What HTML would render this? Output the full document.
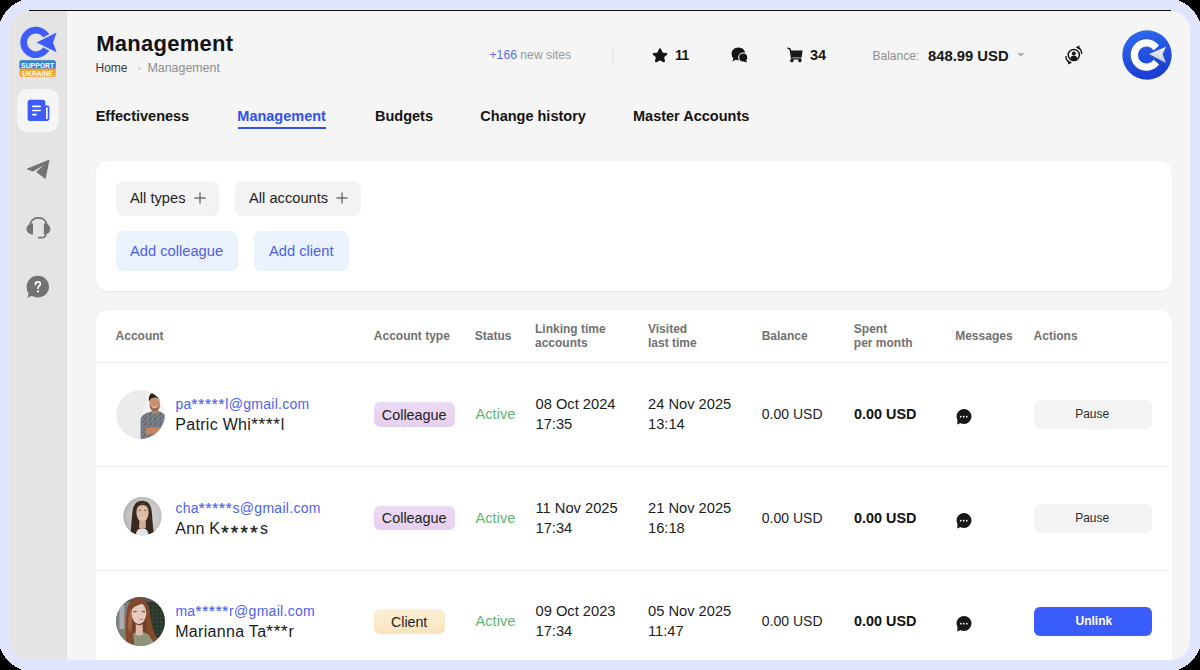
<!DOCTYPE html>
<html><head><meta charset="utf-8">
<style>
*{margin:0;padding:0;box-sizing:border-box}
html,body{width:1200px;height:670px;overflow:hidden;background:#000;font-family:"Liberation Sans",sans-serif}
.abs{position:absolute}
.t{position:absolute;white-space:nowrap;line-height:1}
#frame{position:absolute;left:0;top:0;width:1200px;height:670px;background:#dfe5fd;border-radius:23px}
#app{position:absolute;left:10px;top:11px;width:1180px;height:649px;border-radius:19px;overflow:hidden;background:#f5f5f5}
#pg{position:absolute;left:-10px;top:-11px;width:1200px;height:670px}
#topline{position:absolute;left:29px;top:10px;width:1142px;height:1px;background:#111}
#side{position:absolute;left:10px;top:11px;width:57px;height:649px;background:#e4e4e4;border-right:1px solid #e0e0e0}
.card{position:absolute;background:#fff;border-radius:12px;box-shadow:0 0 0 0.5px rgba(0,0,0,0.02),0 1px 1.5px rgba(0,0,0,0.06)}
.chip{position:absolute;background:#f3f3f3;border-radius:7px}
.addb{position:absolute;background:#eaf2fd;border-radius:7px}
.th{position:absolute;white-space:nowrap;line-height:14px;font-weight:bold;font-size:12px;color:#717171}
.sep{position:absolute;left:0;width:1076px;height:1px;background:#f1f1f1}
.email{color:#4b62f4;font-size:14px;letter-spacing:0.29px}
.a5{letter-spacing:0.9px;font-size:15px;line-height:0;-webkit-text-stroke:0.25px #4b62f4}
.a4{letter-spacing:0.75px;font-size:17px;line-height:0;-webkit-text-stroke:0.1px #1b1b1b}
.name{color:#1b1b1b;font-size:16px;letter-spacing:0.31px}
.badge{position:absolute;border-radius:6px;width:81px;height:24.5px}
.cell{color:#1d1d1d;font-size:14.7px}
.ast{font-size:19px;-webkit-text-stroke:0.45px #1b1b1b;line-height:0;letter-spacing:2.3px;position:relative;top:5.4px;margin-left:0.8px}
.btn{position:absolute;width:118px;height:29px;border-radius:6px;background:#f3f3f3}
</style></head>
<body>
<svg class="abs" style="left:0;top:0" width="1200" height="670" shape-rendering="crispEdges"><rect width="1200" height="670" fill="#000"/><path fill="#dfe5fd" d="M22,0 L1178,0 Q1193.8,6.2 1200,22 L1200,648 Q1193.8,663.8 1178,670 L22,670 Q6.2,663.8 0,648 L0,22 Q6.2,6.2 22,0 Z"/></svg>
<div id="app"><div id="pg">
  <div id="side"></div>
  <svg class="abs" style="left:18px;top:24px" width="42" height="56" viewBox="18 24 42 56">
    <path fill="#3d5cfb" d="M49.23,34.32 A15.6,15.6 0 1 0 49.23,50.48 L43.33,47.61 A9,9 0 1 1 43.33,37.19 Z"/>
    <path fill="#3d5cfb" d="M36.6,42.4 L56.6,32.4 L53,42.4 L56.6,52.2 Z"/>
    <rect x="19.5" y="60.3" width="36.2" height="16.5" rx="2" fill="#f6a22b"/>
    <path d="M19.5,62.3 Q19.5,60.3 21.5,60.3 L53.7,60.3 Q55.7,60.3 55.7,62.3 L55.7,68.6 L19.5,68.6 Z" fill="#2c82e0"/>
    <text x="37.6" y="67.6" text-anchor="middle" font-family="Liberation Sans" font-weight="bold" font-size="7.6" fill="#fff" textLength="33" lengthAdjust="spacingAndGlyphs">SUPPORT</text>
    <text x="37.6" y="75.8" text-anchor="middle" font-family="Liberation Sans" font-weight="bold" font-size="7.6" fill="#fff" textLength="31" lengthAdjust="spacingAndGlyphs">UKRAINE</text>
  </svg>
  <div class="abs" style="left:17px;top:88.5px;width:42px;height:43.5px;border-radius:11px;background:#f5f5f5"></div>
  <svg class="abs" style="left:26px;top:98px" width="26" height="26" viewBox="0 0 26 26">
    <path fill="#3d5cfb" d="M1.6,4.6 Q1.6,1.8 4.4,1.8 L16.6,1.8 Q19.4,1.8 19.4,4.6 L19.4,7.6 L21.4,7.6 Q23.4,7.6 23.4,9.6 L23.4,20.2 Q23.4,23 20.6,23 L4.4,23 Q1.6,23 1.6,20.2 Z"/>
    <rect x="20" y="9.3" width="1.7" height="11.8" rx="0.85" fill="#fff"/>
    <rect x="6" y="7.6" width="9" height="1.6" rx="0.8" fill="#fff"/>
    <rect x="6" y="11.7" width="9" height="1.6" rx="0.8" fill="#fff"/>
    <rect x="6" y="15.8" width="4.8" height="1.6" rx="0.8" fill="#fff"/>
  </svg>
  <svg class="abs" style="left:26px;top:158px" width="25" height="23" viewBox="0 0 25 23">
    <path fill="#737373" stroke="#737373" stroke-width="1.3" stroke-linejoin="round" d="M1.6,11 L22.6,2.5 L18.2,6 L6.8,12.9 Z"/>
    <path fill="#737373" stroke="#737373" stroke-width="1.3" stroke-linejoin="round" d="M11.2,14 L18.6,7 L22.6,2.8 L19.2,19.9 Z"/>
  </svg>
  <svg class="abs" style="left:25px;top:215px" width="27" height="26" viewBox="0 0 27 26">
    <path fill="none" stroke="#737373" stroke-width="1.8" d="M5,12.5 L5,11.5 C5,6 8.6,2.9 13.4,2.9 C18.2,2.9 21.8,6 21.8,11.5 L21.8,12.5"/>
    <path fill="#737373" d="M8,8.6 L8,19.6 C4,19.6 1.5,17.2 1.5,14.1 C1.5,11 4,8.6 8,8.6 Z"/>
    <path fill="#737373" d="M18.8,8.6 L18.8,19.6 C22.8,19.6 25.3,17.2 25.3,14.1 C25.3,11 22.8,8.6 18.8,8.6 Z"/>
    <path fill="none" stroke="#737373" stroke-width="1.7" stroke-linecap="round" d="M20.8,19 C20.8,21.4 19.2,22.7 16.2,22.7 L13.8,22.7"/>
  </svg>
  <svg class="abs" style="left:25px;top:274px" width="26" height="26" viewBox="0 0 26 26">
    <path fill="#727272" d="M12.8,1.8 C19,1.8 24,6.6 24,12.8 C24,19 19,23.4 12.8,23.4 C10.6,23.4 8.6,22.8 7,21.8 L2.4,23.8 L3.6,19.2 C2.2,17.4 1.6,15.2 1.6,12.8 C1.6,6.6 6.6,1.8 12.8,1.8 Z"/>
    <path fill="none" stroke="#fff" stroke-width="1.7" stroke-linecap="round" d="M10.4,10.4 C10.4,8.8 11.4,7.8 12.9,7.8 C14.4,7.8 15.4,8.8 15.4,10.1 C15.4,11.9 12.9,12.1 12.9,14.2"/>
    <circle cx="12.9" cy="17.4" r="1.1" fill="#fff"/>
  </svg>

<!-- header -->
<div class="t" style="left:96.3px;top:33.0px;font-size:22px;font-weight:bold;color:#121212;letter-spacing:0.25px">Management</div>
<div class="t" style="left:95.5px;top:61.6px;font-size:12px;color:#3a3a3a">Home</div>
<div class="abs" style="left:137.5px;top:66.5px;width:3px;height:3px;border-radius:50%;background:#d4d4d4"></div>
<div class="t" style="left:147.5px;top:61.8px;font-size:12.4px;color:#8d8d8d">Management</div>


<!-- top bar -->
<div class="t" style="left:489.5px;top:49.2px;font-size:12.2px;color:#5a6cf2">+166 <span style="color:#979797">new sites</span></div>
<div class="abs" style="left:612px;top:46.5px;width:1px;height:18px;background:#e4e4e4"></div>
<svg class="abs" style="left:651px;top:47px" width="18" height="17" viewBox="0 0 18 17"><path fill="#161616" stroke="#161616" stroke-width="2.2" stroke-linejoin="round" d="M9,2.4 L10.9,6.5 L15.2,7 L12,10 L12.9,14.2 L9,12 L5.1,14.2 L6,10 L2.8,7 L7.1,6.5 Z"/></svg>
<div class="t" style="left:675px;top:47.8px;font-size:14px;font-weight:bold;color:#161616;letter-spacing:-0.5px">11</div>
<svg class="abs" style="left:731px;top:47px" width="18" height="17" viewBox="0 0 18 17"><path fill="#161616" d="M7.4,0.6 C11.4,0.6 14.2,3.4 14.2,6.8 C14.2,10.4 11.4,13.2 7.4,13.2 C6.4,13.2 5.4,13 4.6,12.7 L1.4,14.6 L2.4,11.4 C1.2,10.2 0.6,8.6 0.6,6.8 C0.6,3.4 3.4,0.6 7.4,0.6 Z"/><circle cx="12.2" cy="10.6" r="5.1" fill="#f5f5f5"/><circle cx="12.2" cy="10.6" r="4" fill="#161616"/><path fill="#161616" d="M14.4,13 L16.4,15.6 L12.4,14.4 Z"/></svg>
<svg class="abs" style="left:787px;top:47px" width="17" height="16" viewBox="0 0 17 16"><path fill="none" stroke="#161616" stroke-width="1.5" stroke-linecap="round" d="M1,1.2 C2.3,1.2 3,1.6 3.3,2.8 L4.6,10.6"/><path fill="#161616" d="M3.8,3.6 L15.6,3.6 L14.6,10.4 L4.8,10.4 Z"/><rect x="4.2" y="11.2" width="10" height="1.3" fill="#161616"/><circle cx="4.9" cy="13.6" r="1.8" fill="#161616"/><circle cx="12.9" cy="13.6" r="1.8" fill="#161616"/></svg>
<div class="t" style="left:810px;top:47.8px;font-size:14.5px;font-weight:bold;color:#161616">34</div>
<div class="t" style="left:872.5px;top:50px;font-size:12px;color:#8e8e8e">Balance:</div>
<div class="t" style="left:928px;top:48.8px;font-size:14.8px;font-weight:bold;color:#161616">848.99 USD</div>
<svg class="abs" style="left:1016px;top:52px" width="10" height="6"><path d="M1,1 L8.5,1 L4.75,4.8 Z" fill="#b4b4b4"/></svg>
<svg class="abs" style="left:1063px;top:44px" width="22" height="22" viewBox="0 0 22 22"><circle cx="10.8" cy="11" r="5.6" fill="none" stroke="#161616" stroke-width="1.5"/><circle cx="10.8" cy="9.4" r="1.9" fill="#161616"/><path fill="#161616" d="M7.3,14.5 C7.8,12.4 9,11.6 10.8,11.6 C12.6,11.6 13.8,12.4 14.3,14.5 C13.4,15.6 12.2,16.1 10.8,16.1 C9.4,16.1 8.2,15.6 7.3,14.5 Z"/><path fill="none" stroke="#161616" stroke-width="1.3" d="M15.2,3.6 C17.6,5 18.9,7.4 18.6,10"/><path fill="#161616" d="M12.6,3.3 L16.6,1.6 L16.2,5.6 Z"/><path fill="none" stroke="#161616" stroke-width="1.3" d="M6.4,18.4 C4,17 2.7,14.6 3,12"/><path fill="#161616" d="M9,18.7 L5,20.4 L5.4,16.4 Z"/></svg>
<svg class="abs" style="left:1121px;top:29px" width="52" height="52" viewBox="0 0 52 52"><defs><linearGradient id="lg1" x1="0" y1="0" x2="0.3" y2="1"><stop offset="0" stop-color="#2e6df3"/><stop offset="1" stop-color="#1a3fd2"/></linearGradient><linearGradient id="lg2" x1="0" y1="0" x2="0" y2="1"><stop offset="0" stop-color="#f4f5f8"/><stop offset="1" stop-color="#c4c9d6"/></linearGradient></defs><circle cx="26" cy="26" r="24.7" fill="url(#lg1)"/><path fill="#ffffff" d="M38.12,16.49 A15.8,15.8 0 1 0 38.12,35.51 L32.71,30.68 A8.6,8.6 0 1 1 32.71,21.32 Z"/><path fill="url(#lg2)" d="M28,25 L45,17.8 L41.6,25 L45,33.9 Z"/></svg>

<!-- tabs -->
<div class="t" style="left:95.7px;top:108.7px;font-size:14.5px;font-weight:bold;color:#141414">Effectiveness</div>
<div class="t" style="left:237.3px;top:108.7px;font-size:14.5px;font-weight:bold;color:#3051ef">Management</div>
<div class="abs" style="left:238px;top:127px;width:88px;height:2px;background:#3051ef"></div>
<div class="t" style="left:375px;top:108.7px;font-size:14.5px;font-weight:bold;color:#141414">Budgets</div>
<div class="t" style="left:480.3px;top:108.7px;font-size:14.5px;font-weight:bold;color:#141414">Change history</div>
<div class="t" style="left:633px;top:108.7px;font-size:14.5px;font-weight:bold;color:#141414">Master Accounts</div>

<!-- filter card -->
<div class="card" style="left:96px;top:160.5px;width:1076px;height:130px"></div>
<div class="chip" style="left:116px;top:180.5px;width:103px;height:35px"></div>
<div class="chip" style="left:235px;top:180.5px;width:126px;height:35px"></div>
<div class="t" style="left:130px;top:190.8px;font-size:14.7px;color:#1f1f1f">All types</div>
<div class="t" style="left:249px;top:190.8px;font-size:14.7px;color:#1f1f1f">All accounts</div>
<svg class="abs" style="left:193px;top:191px" width="14" height="14"><path d="M7,1.5 L7,12.5 M1.5,7 L12.5,7" stroke="#6f6f6f" stroke-width="1.4"/></svg>
<svg class="abs" style="left:335px;top:191px" width="14" height="14"><path d="M7,1.5 L7,12.5 M1.5,7 L12.5,7" stroke="#6f6f6f" stroke-width="1.4"/></svg>
<div class="addb" style="left:116px;top:231px;width:122px;height:39.5px"></div>
<div class="addb" style="left:254px;top:231px;width:95px;height:39.5px"></div>
<div class="t" style="left:130px;top:243.8px;font-size:14.7px;color:#4c5fe9">Add colleague</div>
<div class="t" style="left:269px;top:243.8px;font-size:14.7px;color:#4c5fe9">Add client</div>

<!-- table card -->
<div class="card" style="left:96px;top:310px;width:1076px;height:400px"></div>


<!-- table header -->
<div class="th" style="left:115.6px;top:328.8px">Account</div>
<div class="th" style="left:373.8px;top:328.8px">Account type</div>
<div class="th" style="left:474.8px;top:328.8px">Status</div>
<div class="th" style="left:535px;top:322.1px">Linking time<br>accounts</div>
<div class="th" style="left:648px;top:322.1px">Visited<br>last time</div>
<div class="th" style="left:761.7px;top:328.8px">Balance</div>
<div class="th" style="left:853.8px;top:322.1px">Spent<br>per month</div>
<div class="th" style="left:955.2px;top:328.8px">Messages</div>
<div class="th" style="left:1033.6px;top:328.8px">Actions</div>
<div class="sep" style="left:96px;top:362px"></div>
<div class="sep" style="left:96px;top:466px"></div>
<div class="sep" style="left:96px;top:570px"></div>

<!-- row -->
<svg class="abs" style="left:116px;top:390px" width="49" height="49" viewBox="0 0 49 49"><defs><clipPath id="c1"><circle cx="24.5" cy="24.5" r="24.4"/></clipPath><filter id="bl1" x="-10%" y="-10%" width="120%" height="120%"><feGaussianBlur stdDeviation="0.45"/></filter><pattern id="sp1" width="5" height="5" patternUnits="userSpaceOnUse"><rect width="5" height="5" fill="#6b717b"/><rect x="0.3" y="0.4" width="1.2" height="1" fill="#a9aeb6"/><rect x="2.6" y="1.6" width="1" height="1.2" fill="#9ca1a9"/><rect x="1.2" y="3.4" width="1.3" height="0.9" fill="#b0b4bb"/><rect x="3.8" y="3.8" width="0.9" height="0.8" fill="#4e535b"/><rect x="1.8" y="1.9" width="0.9" height="0.8" fill="#4e535b"/></pattern></defs><g clip-path="url(#c1)"><rect width="49" height="49" fill="#ebebed"/><g filter="url(#bl1)"><path d="M32.4,0 L49,0 L49,49 L24,49 L25,30 Z" fill="#f3f3f4"/><path d="M24.6,49 L24.6,30 C25,26 28,24 32,22.5 L36,21.2 L42.5,21.2 C46,22 48.5,24 49,26 L49,49 Z" fill="url(#sp1)"/><path d="M36,17 L42,17 L42.5,22 C40.5,24.5 37.5,24.5 35.5,22 Z" fill="#b98166"/><ellipse cx="38.8" cy="13.5" rx="5.2" ry="6.6" fill="#c99272"/><path d="M33.6,14 C33.6,19 36,21 38.8,21 C41.6,21 44,19 44,14 C43,17 41,18.5 38.8,18.5 C36.6,18.5 34.6,17 33.6,14 Z" fill="#8a6652"/><path d="M33,12 C32,6 34.5,2.8 38,2.8 C41.6,2.8 44,5 43.6,9.5 C42.4,8 40,7.4 38,7.6 C35.8,7.8 34,9.4 33,12 Z" fill="#2a211e"/><path d="M36,15.8 C37.5,17.6 40.3,17.6 41.8,15.8 C41.2,18.4 36.6,18.4 36,15.8 Z" fill="#f6f2ec"/><path d="M29.5,38.2 C35,36.8 42,36.8 47,38.2 L46.5,44.8 C40.5,43.6 34.5,43.6 30,44.8 Z" fill="#c6855f"/></g></g></svg>

<div class="t email" style="left:175.4px;top:397.00px">pa<span class="a5">*****</span>l@gmail.com</div>
<div class="t name" style="left:175.2px;top:417.30px">Patric Whi<span class="a4">****</span>l</div>
<div class="badge" style="left:374.3px;top:402.20px;background:linear-gradient(#ecdaf4,#e5cfee)"></div><div class="t" style="left:381.8px;top:407.50px;font-size:14.4px;color:#222">Colleague</div>
<div class="t" style="left:475.6px;top:407.10px;font-size:14.6px;color:#5fb56f">Active</div>
<div class="t cell" style="left:535.5px;top:396.90px">08 Oct 2024</div>
<div class="t cell" style="left:535.5px;top:417.20px">17:35</div>
<div class="t cell" style="left:648px;top:396.90px">24 Nov 2025</div>
<div class="t cell" style="left:648px;top:417.20px">13:14</div>
<div class="t" style="left:761.8px;top:407.40px;font-size:14px;color:#1d1d1d">0.00 USD</div>
<div class="t" style="left:854px;top:407.30px;font-size:14.4px;font-weight:bold;color:#111">0.00 USD</div>
<svg class="abs" style="left:955px;top:408.00px" width="18" height="18" viewBox="0 0 18 18"><circle cx="9" cy="8.5" r="7.5" fill="#181818"/><path d="M2.6,11.5 L2.2,16.6 L7,14.6 Z" fill="#181818"/><circle cx="5.7" cy="8.7" r="0.85" fill="#fff"/><circle cx="8.7" cy="8.7" r="0.85" fill="#fff"/><circle cx="11.8" cy="8.7" r="0.85" fill="#fff"/></svg>
<div class="btn" style="left:1034.4px;top:400.00px"></div><div class="t" style="left:1075.2px;top:408.40px;font-size:12px;color:#2a2a2a">Pause</div>

<!-- row -->
<svg class="abs" style="left:122.5px;top:496.5px" width="39" height="39" viewBox="0 0 39 39"><defs><clipPath id="c2"><circle cx="19.5" cy="19.3" r="19.2"/></clipPath><radialGradient id="rg2" cx="0.55" cy="0.5" r="0.6"><stop offset="0" stop-color="#dadada"/><stop offset="0.7" stop-color="#c4c4c4"/><stop offset="1" stop-color="#a4a4a4"/></radialGradient><filter id="bl2" x="-10%" y="-10%" width="120%" height="120%"><feGaussianBlur stdDeviation="0.6"/></filter></defs><g clip-path="url(#c2)"><rect width="39" height="39" fill="url(#rg2)"/><g filter="url(#bl2)"><path d="M7.6,37 C8.2,30 8.6,22 9.4,15 C10.2,7.6 13.6,3.8 19.2,3.8 C24.8,3.8 28.2,7.6 28.8,15 C29.4,22 29.8,30 31,37 Z" fill="#3b2a22"/><path d="M12.6,39 C12.8,34 15,31.2 19.2,31.2 C23.4,31.2 25.4,34 25.6,39 Z" fill="#dfe3ea"/><path d="M16.4,23 L22.6,23 L23,30.8 C21,32.2 18,32.2 16,30.8 Z" fill="#d2ad97"/><ellipse cx="19.5" cy="15.6" rx="6.1" ry="9.3" fill="#dcbba5"/><path d="M13.4,12 C14,8 16.2,6.2 19.5,6.2 C22.8,6.2 25,8 25.6,12 C24,9 22,8 19.5,8 C17,8 15,9 13.4,12 Z" fill="#4a3328"/><path d="M16.4,19.4 C18.2,21.6 20.8,21.6 22.6,19.4 C22,22.4 17,22.4 16.4,19.4 Z" fill="#f6f1ec"/><path d="M15.8,13.4 L18,13.2 M21,13.2 L23.2,13.4" stroke="#6e5040" stroke-width="0.9"/></g></g></svg>

<div class="t email" style="left:175.4px;top:500.70px">cha<span class="a5">*****</span>s@gmail.com</div>
<div class="t name" style="left:175.2px;top:521.00px">Ann K<span class="ast">****</span>s</div>
<div class="badge" style="left:374.3px;top:505.90px;background:linear-gradient(#ecdaf4,#e5cfee)"></div><div class="t" style="left:381.8px;top:511.20px;font-size:14.4px;color:#222">Colleague</div>
<div class="t" style="left:475.6px;top:510.80px;font-size:14.6px;color:#5fb56f">Active</div>
<div class="t cell" style="left:535.5px;top:500.60px">11 Nov 2025</div>
<div class="t cell" style="left:535.5px;top:520.90px">17:34</div>
<div class="t cell" style="left:648px;top:500.60px">21 Nov 2025</div>
<div class="t cell" style="left:648px;top:520.90px">16:18</div>
<div class="t" style="left:761.8px;top:511.10px;font-size:14px;color:#1d1d1d">0.00 USD</div>
<div class="t" style="left:854px;top:511.00px;font-size:14.4px;font-weight:bold;color:#111">0.00 USD</div>
<svg class="abs" style="left:955px;top:511.70px" width="18" height="18" viewBox="0 0 18 18"><circle cx="9" cy="8.5" r="7.5" fill="#181818"/><path d="M2.6,11.5 L2.2,16.6 L7,14.6 Z" fill="#181818"/><circle cx="5.7" cy="8.7" r="0.85" fill="#fff"/><circle cx="8.7" cy="8.7" r="0.85" fill="#fff"/><circle cx="11.8" cy="8.7" r="0.85" fill="#fff"/></svg>
<div class="btn" style="left:1034.4px;top:503.70px"></div><div class="t" style="left:1075.2px;top:512.10px;font-size:12px;color:#2a2a2a">Pause</div>

<!-- row -->
<svg class="abs" style="left:116px;top:597px" width="49" height="49" viewBox="0 0 49 49"><defs><clipPath id="c3"><circle cx="24.5" cy="24.5" r="24.4"/></clipPath><filter id="bl3" x="-10%" y="-10%" width="120%" height="120%"><feGaussianBlur stdDeviation="0.75"/></filter><pattern id="fo3" width="4" height="4" patternUnits="userSpaceOnUse"><rect width="4" height="4" fill="#2c3a2d"/><circle cx="1" cy="1.2" r="0.8" fill="#475646"/><circle cx="3" cy="3" r="0.6" fill="#1f2920"/></pattern></defs><g clip-path="url(#c3)"><rect width="49" height="49" fill="#57595b"/><g filter="url(#bl3)"><rect x="0" y="0" width="14" height="40" fill="#7d7f81"/><rect x="3.4" y="4.5" width="4.8" height="28" fill="#acaeaf"/><rect x="0" y="0" width="49" height="5" fill="#5a5d5f"/><rect x="30" y="4.5" width="19" height="37" fill="url(#fo3)"/><path d="M11,40 L11,15 C12,5 17,1 22.5,1 C29,1 33,5 33.6,14 L34.5,30 L39,42 L30,44 L14,44 Z" fill="#6f3d26"/><path d="M0,34 C5,30.5 12,31 17,36 L17,49 L0,49 Z" fill="#7f856c"/><path d="M15,49 L16.5,37 C20,34.5 27,34.5 31,36.5 L43,42 L49,49 Z" fill="#8f9579"/><path d="M19.8,27 C21.8,28.6 24.6,28.6 26.6,27 L27,37.5 C25,39 21.5,39 19.6,37.5 Z" fill="#dcbcb0"/><path d="M22.5,1 C16,1 11.5,6.5 10.5,16 C9.5,25 9,36 10.5,49 L18.5,49 C17.5,42 16.8,33 16,24 C15.5,16 16.5,9 19.5,6 C24,4 28,5.5 29.5,10 C30,18 29.5,26 31,33 C33,39 35.5,43 38.5,46 L42,42.5 C38,37 36,30 34.5,20 C33.5,10 30.5,1 22.5,1 Z" fill="#844a2e"/><path d="M12,32 C12,24 12.5,15 16,9.5 L18.5,6.5 L16.5,20 L15,36 Z" fill="#a5633f"/><ellipse cx="22.9" cy="16.2" rx="7.3" ry="11" fill="#e6c9bf"/><path d="M22.8,22 C24.2,21.2 26.2,21.2 27.6,22 C26.2,23.3 24.2,23.3 22.8,22 Z" fill="#c98282"/><path d="M17.2,14.8 L20.6,14.4 M25.8,14.4 L29,14.8" stroke="#6f4f4f" stroke-width="1.2"/><path d="M15,10 C17.5,5 23.5,3.8 29,6.5 C24,7 18,8.5 15,14 Z" fill="#7c4429"/></g></g></svg>

<div class="t email" style="left:175.4px;top:604.00px">ma<span class="a5">*****</span>r@gmail.com</div>
<div class="t name" style="left:175.2px;top:624.30px">Marianna Ta<span class="a4">***</span>r</div>
<div class="badge" style="left:374.3px;top:609.20px;width:71px;background:linear-gradient(#fdf0d6,#f8e3bd)"></div><div class="t" style="left:391px;top:614.50px;font-size:14.2px;color:#222">Client</div>
<div class="t" style="left:475.6px;top:614.10px;font-size:14.6px;color:#5fb56f">Active</div>
<div class="t cell" style="left:535.5px;top:603.90px">09 Oct 2023</div>
<div class="t cell" style="left:535.5px;top:624.20px">17:34</div>
<div class="t cell" style="left:648px;top:603.90px">05 Nov 2025</div>
<div class="t cell" style="left:648px;top:624.20px">11:47</div>
<div class="t" style="left:761.8px;top:614.40px;font-size:14px;color:#1d1d1d">0.00 USD</div>
<div class="t" style="left:854px;top:614.30px;font-size:14.4px;font-weight:bold;color:#111">0.00 USD</div>
<svg class="abs" style="left:955px;top:615.00px" width="18" height="18" viewBox="0 0 18 18"><circle cx="9" cy="8.5" r="7.5" fill="#181818"/><path d="M2.6,11.5 L2.2,16.6 L7,14.6 Z" fill="#181818"/><circle cx="5.7" cy="8.7" r="0.85" fill="#fff"/><circle cx="8.7" cy="8.7" r="0.85" fill="#fff"/><circle cx="11.8" cy="8.7" r="0.85" fill="#fff"/></svg>
<div class="btn" style="left:1034.4px;top:607.00px;background:#3a5cfb"></div><div class="t" style="left:1075.5px;top:615.40px;font-size:12px;font-weight:bold;color:#fff">Unlink</div>
</div></div>
<div id="topline"></div>
</body></html>
